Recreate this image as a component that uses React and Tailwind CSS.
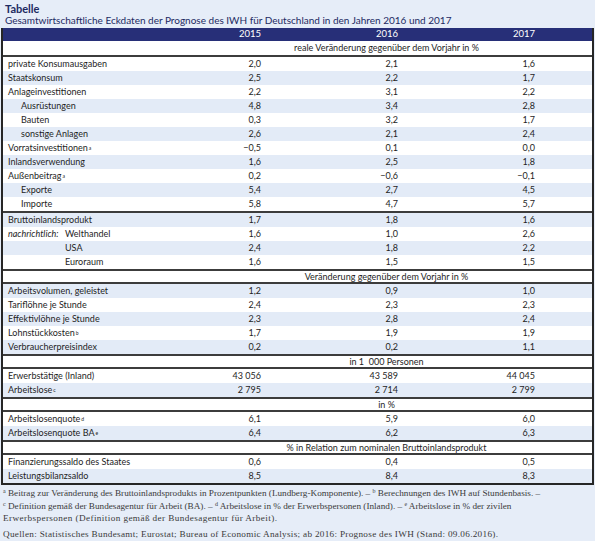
import React from "react";

const groups = [
    {
        rows: [
            { label: "private Konsumausgaben", v: ["2,0", "2,1", "1,6"] },
            { label: "Staatskonsum", v: ["2,5", "2,2", "1,7"], blue: true },
            { label: "Anlageinvestitionen", v: ["2,2", "3,1", "2,2"] },
            { label: "Ausrüstungen", v: ["4,8", "3,4", "2,8"], blue: true, indent: true },
            { label: "Bauten", v: ["0,3", "3,2", "1,7"], indent: true },
            { label: "sonstige Anlagen", v: ["2,6", "2,1", "2,4"], blue: true, indent: true },
            { label: "Vorratsinvestitionen", sup: "a", v: ["−0,5", "0,1", "0,0"] },
            { label: "Inlandsverwendung", v: ["1,6", "2,5", "1,8"], blue: true },
            { label: "Außenbeitrag", sup: "a", v: ["0,2", "−0,6", "−0,1"] },
            { label: "Exporte", v: ["5,4", "2,7", "4,5"], blue: true, indent: true },
            { label: "Importe", v: ["5,8", "4,7", "5,7"], indent: true },
        ],
    },
    {
        rows: [
            { label: "Bruttoinlandsprodukt", v: ["1,7", "1,8", "1,6"], blue: true },
            { label: "Welthandel", note: true, v: ["1,6", "1,0", "2,6"] },
            { label: "USA", sub: true, v: ["2,4", "1,8", "2,2"], blue: true },
            { label: "Euroraum", sub: true, v: ["1,6", "1,5", "1,5"] },
        ],
    },
    {
        title: "Veränderung gegenüber dem Vorjahr in %",
        rows: [
            { label: "Arbeitsvolumen, geleistet", v: ["1,2", "0,9", "1,0"], blue: true },
            { label: "Tariflöhne je Stunde", v: ["2,4", "2,3", "2,3"] },
            { label: "Effektivlöhne je Stunde", v: ["2,3", "2,8", "2,4"], blue: true },
            { label: "Lohnstückkosten", sup: "b", v: ["1,7", "1,9", "1,9"] },
            { label: "Verbraucherpreisindex", v: ["0,2", "0,2", "1,1"], blue: true },
        ],
    },
    {
        title: "in 1  000 Personen",
        rows: [
            { label: "Erwerbstätige (Inland)", v: ["43 056", "43 589", "44 045"] },
            { label: "Arbeitslose", sup: "c", v: ["2 795", "2 714", "2 799"], blue: true },
        ],
    },
    {
        title: "in %",
        rows: [
            { label: "Arbeitslosenquote", sup: "d", v: ["6,1", "5,9", "6,0"] },
            { label: "Arbeitslosenquote BA", sup: "e", v: ["6,4", "6,2", "6,3"], blue: true },
        ],
    },
    {
        title: "% in Relation zum nominalen Bruttoinlandsprodukt",
        rows: [
            { label: "Finanzierungssaldo des Staates", v: ["0,6", "0,4", "0,5"] },
            { label: "Leistungsbilanzsaldo", v: ["8,5", "8,4", "8,3"], blue: true },
        ],
    },
];

// section label, centred over the three year columns
function SectionRow({ text, first }) {
    return (
        <div
            className={
                "flex items-center bg-white border-b-2 border-[#3c3c3c] " +
                (first ? "h-[16px]" : "h-[15px] border-t-2")
            }
        >
            <div className="w-[178px]" />
            <div className="flex-1 text-center whitespace-pre">{text}</div>
        </div>
    );
}

function DataRow({ row }) {
    return (
        <div
            className={
                "flex h-[14px] items-center " +
                (row.blue ? "bg-[#e3ebf7]" : "bg-white")
            }
        >
            <div
                className={
                    "w-[178px] whitespace-nowrap " +
                    (row.indent ? "pl-[18px]" : "pl-[5px]")
                }
            >
                {row.note && (
                    <span className="italic inline-block w-[57px]">nachrichtlich:</span>
                )}
                {row.sub && <span className="inline-block w-[57px]" />}
                {row.label}
                {row.sup && (
                    <sup className="text-[5px] relative -top-[1px] ml-[1px]">{row.sup}</sup>
                )}
            </div>
            {row.v.map((x, i) => (
                <div key={i} className="w-[137px] pr-[57px] text-right whitespace-nowrap">
                    {x}
                </div>
            ))}
        </div>
    );
}

export default function App() {
    return (
        <div className="w-[600px] h-[541px] bg-white">
            <div className="w-[595px] h-[541px] bg-[#e6edf8] pt-[3px] font-['Lato',sans-serif]">
                <div className="px-[5px] text-[#1d2a62]">
                    <div className="font-bold text-[11px] leading-[11px]">Tabelle</div>
                    <div className="text-[10px] leading-[12px]">
                        Gesamtwirtschaftliche Eckdaten der Prognose des IWH für Deutschland
                        in den Jahren 2016 und 2017
                    </div>
                </div>

                <div className="mt-[2px] ml-[1px] w-[593px] border-x-2 border-b-2 border-[#262626] text-[9px] text-[#1e1e1e]">
                    <div className="flex h-[13px] items-center bg-[#272f78] text-white text-[9.5px]">
                        <div className="w-[178px]" />
                        {["2015", "2016", "2017"].map((y) => (
                            <div key={y} className="w-[137px] pr-[57px] text-right">
                                {y}
                            </div>
                        ))}
                    </div>
                    <SectionRow text="reale Veränderung gegenüber dem Vorjahr in %" first />
                    {groups.map((g, gi) => (
                        <div key={gi}>
                            {gi === 1 && <div className="h-[2px] bg-[#3c3c3c]" />}
                            {g.title && <SectionRow text={g.title} />}
                            {g.rows.map((r) => (
                                <DataRow key={r.label} row={r} />
                            ))}
                        </div>
                    ))}
                </div>

                <div className="mt-[2px] px-[3px] font-['Liberation_Serif',serif] text-[9.2px] leading-[12.5px] text-[#3a3a3a] whitespace-nowrap">
                    <div>
                        <sup className="text-[6px]">a</sup> Beitrag zur Veränderung des
                        Bruttoinlandsprodukts in Prozentpunkten (Lundberg-Komponente). –{" "}
                        <sup className="text-[6px]">b</sup> Berechnungen des IWH auf
                        Stundenbasis. –
                    </div>
                    <div>
                        <sup className="text-[6px]">c</sup> Definition gemäß der
                        Bundesagentur für Arbeit (BA). – <sup className="text-[6px]">d</sup>{" "}
                        Arbeitslose in % der Erwerbspersonen (Inland). –{" "}
                        <sup className="text-[6px]">e</sup> Arbeitslose in % der zivilen
                    </div>
                    <div className="tracking-[0.4px]">
                        Erwerbspersonen (Definition gemäß der Bundesagentur für Arbeit).
                    </div>
                    <div className="mt-[3px] tracking-[0.3px]">
                        Quellen: Statistisches Bundesamt; Eurostat; Bureau of Economic
                        Analysis; ab 2016: Prognose des IWH (Stand: 09.06.2016).
                    </div>
                </div>
            </div>
        </div>
    );
}
